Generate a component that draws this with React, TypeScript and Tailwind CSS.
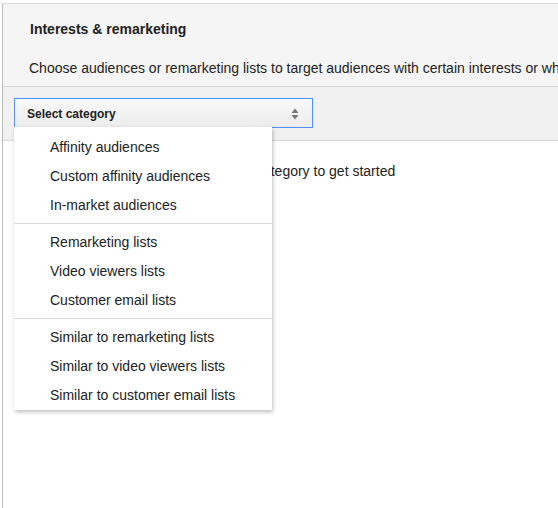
import { useState } from 'react'

const groups = [
  ['Affinity audiences', 'Custom affinity audiences', 'In-market audiences'],
  ['Remarketing lists', 'Video viewers lists', 'Customer email lists'],
  [
    'Similar to remarketing lists',
    'Similar to video viewers lists',
    'Similar to customer email lists',
  ],
]

function SortArrows() {
  return (
    <svg width="8" height="12" viewBox="0 0 8 12" className="text-[#777]">
      <path d="M4 0.5 L7.5 5 H0.5 Z" fill="currentColor" />
      <path d="M4 11.5 L7.5 7 H0.5 Z" fill="currentColor" />
    </svg>
  )
}

function CategoryMenu() {
  return (
    <div className="absolute left-[-1px] top-full z-10 w-[258px] bg-white pt-[6px] shadow-[1px_2px_4px_rgba(0,0,0,0.25)]">
      {groups.map((items, i) => (
        <div key={i}>
          {i > 0 && <div className="mt-[3px] mb-[4px] h-px bg-[#d9d9d9]" />}
          {items.map((item) => (
            <div
              key={item}
              className="flex h-[29px] items-center pl-[36px] text-[14px] text-[#222]"
            >
              {item}
            </div>
          ))}
        </div>
      ))}
    </div>
  )
}

export default function App() {
  const [open] = useState(true)

  return (
    <div
      className="h-[508px] w-[558px] overflow-hidden bg-white pl-[2px] pt-[3px]"
      style={{ fontFamily: '"Liberation Sans", Arial, sans-serif' }}
    >
      <div className="h-full w-[720px] border-l border-t border-l-[#bdbdbd] border-t-[#dcdcdc]">
        <section className="h-[83px] border-b border-[#d6d6d6] bg-[#f5f5f5] pl-[27px] pt-[15px]">
          <h2 className="text-[14px] font-bold leading-[20px] text-[#222]">
            Interests &amp; remarketing
          </h2>
          <p className="-ml-px mt-[19px] whitespace-nowrap text-[14px] leading-[20px] text-[#222]">
            Choose audiences or remarketing lists to target audiences with
            certain interests or who have interacted with your business
          </p>
        </section>
        <div className="h-[54px] border-b border-[#d6d6d6] bg-[#f1f1f1] pl-[11px] pt-[11px]">
          <div className="relative flex h-[30px] w-[299px] items-center justify-between border border-[#4d90fe] bg-gradient-to-b from-[#f9f9f9] to-[#ececec] pl-[12px] pr-[13px] pt-[2px]">
            <span className="text-[12px] font-bold text-[#222]">
              Select category
            </span>
            <SortArrows />
            {open && <CategoryMenu />}
          </div>
        </div>
        <p className="pl-[21px] pt-[20px] text-[14px] leading-[20px] text-[#222]">
          To add audiences, search or select a category to get started
        </p>
      </div>
    </div>
  )
}
